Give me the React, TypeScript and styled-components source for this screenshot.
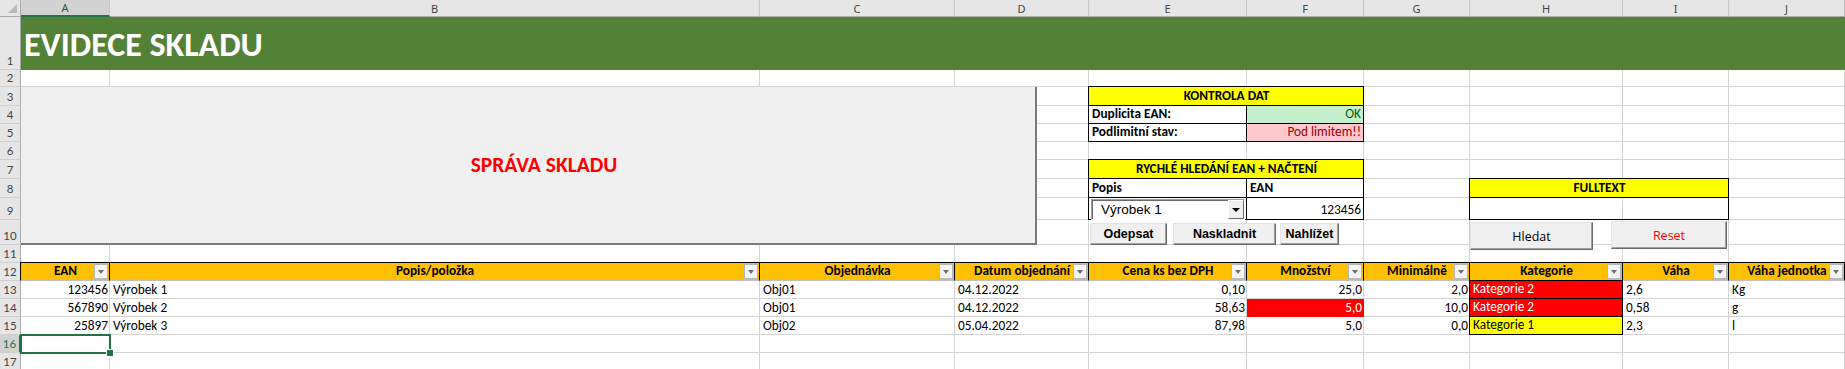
import React from "react";
import styled, { createGlobalStyle, css } from "styled-components";

const GRID = "#d4d4d4";
const HEAD_BG = "#e6e6e6";
const XL_GREEN = "#217346";
const BODY_FONT = `Carlito, Lato, "Noto Sans", sans-serif`;

const COLS = [21, 89, 650, 195, 134, 158, 117, 106, 153, 106, 116];
const ROWS = [17, 53, 17, 19, 18, 18, 18, 19, 19, 22, 25, 18, 18, 18, 18, 18, 18, 18];
const LETTERS = ["A", "B", "C", "D", "E", "F", "G", "H", "I", "J"];

const GlobalStyle = createGlobalStyle`
  html, body { margin: 0; padding: 0; background: #ffffff; overflow: hidden; }
  body { font-family: ${BODY_FONT}; }
  * { box-sizing: border-box; }
`;

type Place = { $r: number; $c: number; $rs?: number; $cs?: number };

const place = css<Place>`
  grid-row: ${(p) => p.$r + 1} / span ${(p) => p.$rs ?? 1};
  grid-column: ${(p) => p.$c + 1} / span ${(p) => p.$cs ?? 1};
`;

const Sheet = styled.div`
  display: grid;
  grid-template-columns: ${COLS.map((c) => `${c}px`).join(" ")};
  grid-template-rows: ${ROWS.map((r) => `${r}px`).join(" ")};
  width: 1845px;
  height: 369px;
  overflow: hidden;
  font-family: ${BODY_FONT};
  font-size: 13.3px;
  color: #000;
`;

const Corner = styled.div`
  grid-row: 1;
  grid-column: 1;
  position: relative;
  background: ${HEAD_BG};
  border-right: 1px solid #ababab;
  border-bottom: 1px solid #ababab;
  &::after {
    content: "";
    position: absolute;
    right: 3px;
    bottom: 3px;
    width: 9px;
    height: 9px;
    background: #b8b8b8;
    clip-path: polygon(100% 0, 100% 100%, 0 100%);
  }
`;

const ColHead = styled.div<{ $c: number; $sel?: boolean }>`
  grid-row: 1;
  grid-column: ${(p) => p.$c + 1};
  display: flex;
  align-items: center;
  justify-content: center;
  font-family: "Noto Sans", Lato, sans-serif;
  font-size: 11px;
  color: ${(p) => (p.$sel ? "#1d5e3a" : "#444")};
  background: ${(p) => (p.$sel ? "#d2d2d2" : HEAD_BG)};
  border-right: 1px solid #c6c6c6;
  border-bottom: ${(p) => (p.$sel ? `2px solid ${XL_GREEN}` : "1px solid #ababab")};
`;

const RowHead = styled.div<{ $r: number; $sel?: boolean }>`
  grid-row: ${(p) => p.$r + 1};
  grid-column: 1;
  display: flex;
  align-items: flex-end;
  justify-content: center;
  padding-bottom: 2px;
  font-family: Lato, "Noto Sans", sans-serif;
  font-size: 11.5px;
  line-height: 13px;
  color: ${(p) => (p.$sel ? XL_GREEN : "#444")};
  background: ${(p) => (p.$sel ? "#d2d2d2" : HEAD_BG)};
  border-bottom: 1px solid #cfcfcf;
  border-right: ${(p) => (p.$sel ? `2px solid ${XL_GREEN}` : "1px solid #ababab")};
`;

const GridCell = styled.div<Place>`
  ${place}
  border-right: 1px solid ${GRID};
  border-bottom: 1px solid ${GRID};
`;

type CellLook = {
  $align?: "l" | "c" | "r";
  $bg?: string;
  $fg?: string;
  $bold?: boolean;
  $boxed?: boolean;
  $head?: boolean;
};

const Cell = styled.div<Place & CellLook>`
  ${place}
  position: relative;
  display: flex;
  align-items: flex-end;
  justify-content: ${(p) => (p.$align === "r" ? "flex-end" : p.$align === "c" ? "center" : "flex-start")};
  padding: 0 2px 1px 3px;
  line-height: 16px;
  white-space: nowrap;
  background: ${(p) => p.$bg ?? "transparent"};
  color: ${(p) => p.$fg ?? "#000"};
  font-weight: ${(p) => (p.$bold ? 700 : 400)};
  ${(p) =>
    p.$boxed
      ? css`
          margin: -1px 0 0 -1px;
          border: 1px solid #000;
        `
      : p.$head
      ? css`
          margin: -1px 0 0 -1px;
          border: 1px solid #000;
          border-bottom-color: #bfbfbf;
        `
      : ""}
`;

const Title = styled.div<Place>`
  ${place}
  display: flex;
  align-items: center;
  padding: 2px 0 0 3px;
  background: #538135;
  color: #ffffff;
  font-family: ${BODY_FONT};
  font-weight: 700;
  font-size: 34px;
`;

const Panel = styled.div<Place>`
  ${place}
  z-index: 2;
  margin-right: 52px;
  display: flex;
  align-items: center;
  justify-content: center;
  padding-left: 32px;
  background: #f0f0f0;
  border-right: 2px solid #7a7a7a;
  border-bottom: 2px solid #7a7a7a;
  color: #ff0000;
  font-family: ${BODY_FONT};
  font-weight: 700;
  font-size: 21.5px;
`;

const FilterBtn = styled.span`
  position: absolute;
  right: 1px;
  bottom: 1px;
  width: 14px;
  height: 15px;
  background: #f4f4f4;
  border: 1px solid #b6b6b6;
  &::after {
    content: "";
    position: absolute;
    left: 3px;
    top: 5px;
    border-left: 3.5px solid transparent;
    border-right: 3.5px solid transparent;
    border-top: 4px solid #6e6e6e;
  }
`;

const Combo = styled.div<Place>`
  ${place}
  z-index: 2;
  align-self: start;
  margin: 1px 2px 0 2px;
  height: 21px;
  display: flex;
  align-items: center;
  justify-content: space-between;
  padding-left: 9px;
  background: #ffffff;
  border: 1px solid;
  border-color: #a0a0a0 #ffffff #ffffff #a0a0a0;
  box-shadow: inset 1px 1px 0 #696969;
  font-family: "Liberation Sans", Arial, sans-serif;
  font-size: 13.5px;
  color: #000;
`;

const ComboArrow = styled.span`
  position: relative;
  width: 16px;
  height: 19px;
  background: #f0f0f0;
  border: 1px solid;
  border-color: #ffffff #696969 #696969 #ffffff;
  &::after {
    content: "";
    position: absolute;
    left: 3px;
    top: 7px;
    border-left: 4px solid transparent;
    border-right: 4px solid transparent;
    border-top: 4px solid #000;
  }
`;

const ButtonBar = styled.div<Place & { $pt: number; $pl: number }>`
  ${place}
  z-index: 2;
  display: flex;
  align-items: flex-start;
  padding-top: ${(p) => p.$pt}px;
  padding-left: ${(p) => p.$pl}px;
`;

const FormButton = styled.button<{ $w: number; $h: number; $ml?: number; $mt?: number; $bold?: boolean; $fg?: string }>`
  flex: none;
  width: ${(p) => p.$w}px;
  height: ${(p) => p.$h}px;
  margin-left: ${(p) => p.$ml ?? 0}px;
  margin-top: ${(p) => p.$mt ?? 0}px;
  padding: 0;
  background: #f0f0f0;
  border: 1px solid;
  border-color: #e3e3e3 #696969 #696969 #e3e3e3;
  box-shadow: inset -1px -1px 0 #a0a0a0;
  color: ${(p) => p.$fg ?? "#000"};
  font-family: ${(p) => (p.$bold ? `"Liberation Sans", Arial, sans-serif` : `"Open Sans", "Noto Sans", sans-serif`)};
  font-weight: ${(p) => (p.$bold ? 700 : 400)};
  font-size: 12.5px;
`;

const ActiveCell = styled.div<Place>`
  ${place}
  z-index: 3;
  position: relative;
  margin: -1px;
  border: 2px solid ${XL_GREEN};
  &::after {
    content: "";
    position: absolute;
    right: -5px;
    bottom: -5px;
    width: 6px;
    height: 6px;
    background: ${XL_GREEN};
    border: 1px solid #ffffff;
  }
`;

type CellDef = {
  r: number;
  c: number;
  cs?: number;
  text?: string;
  align?: "l" | "c" | "r";
  bg?: string;
  fg?: string;
  bold?: boolean;
  boxed?: boolean;
  head?: boolean;
  filter?: boolean;
};

const headers = [
  "EAN",
  "Popis/položka",
  "Objednávka",
  "Datum objednání",
  "Cena ks bez DPH",
  "Množství",
  "Minimálně",
  "Kategorie",
  "Váha",
  "Váha jednotka",
];

const items = [
  { ean: "123456", popis: "Výrobek 1", obj: "Obj01", datum: "04.12.2022", cena: "0,10", mnoz: "25,0", min: "2,0", kat: "Kategorie 2", vaha: "2,6", jed: "Kg", low: false },
  { ean: "567890", popis: "Výrobek 2", obj: "Obj01", datum: "04.12.2022", cena: "58,63", mnoz: "5,0", min: "10,0", kat: "Kategorie 2", vaha: "0,58", jed: "g", low: true },
  { ean: "25897", popis: "Výrobek 3", obj: "Obj02", datum: "05.04.2022", cena: "87,98", mnoz: "5,0", min: "0,0", kat: "Kategorie 1", vaha: "2,3", jed: "l", low: false },
];

const YELLOW = "#ffff00";

const cells: CellDef[] = [
  { r: 3, c: 5, cs: 2, text: "KONTROLA DAT", align: "c", bg: YELLOW, bold: true, boxed: true },
  { r: 4, c: 5, text: "Duplicita EAN:", bold: true, boxed: true },
  { r: 4, c: 6, text: "OK", align: "r", bg: "#c6efce", fg: "#006100", boxed: true },
  { r: 5, c: 5, text: "Podlimitní stav:", bold: true, boxed: true },
  { r: 5, c: 6, text: "Pod limitem!!", align: "r", bg: "#ffc7ce", fg: "#9c0006", boxed: true },
  { r: 7, c: 5, cs: 2, text: "RYCHLÉ HLEDÁNÍ EAN + NAČTENÍ", align: "c", bg: YELLOW, bold: true, boxed: true },
  { r: 8, c: 5, text: "Popis", bold: true, boxed: true },
  { r: 8, c: 6, text: "EAN", bold: true, boxed: true },
  { r: 9, c: 5, boxed: true },
  { r: 9, c: 6, text: "123456", align: "r", boxed: true },
  { r: 8, c: 8, cs: 2, text: "FULLTEXT", align: "c", bg: YELLOW, bold: true, boxed: true },
  { r: 9, c: 8, cs: 2, boxed: true },
  ...headers.map((h, i) => ({ r: 12, c: i + 1, text: h, align: "c" as const, bg: "#ffc000", bold: true, head: true, filter: true })),
  ...items.flatMap((it, i) => {
    const r = 13 + i;
    const katRed = it.kat === "Kategorie 2";
    return [
      { r, c: 1, text: it.ean, align: "r" as const },
      { r, c: 2, text: it.popis },
      { r, c: 3, text: it.obj },
      { r, c: 4, text: it.datum },
      { r, c: 5, text: it.cena, align: "r" as const },
      { r, c: 6, text: it.mnoz, align: "r" as const, bg: it.low ? "#ff0000" : undefined, fg: it.low ? "#ffffff" : undefined },
      { r, c: 7, text: it.min, align: "r" as const },
      { r, c: 8, text: it.kat, bg: katRed ? "#ff0000" : YELLOW, fg: katRed ? "#ffffff" : "#000", boxed: true },
      { r, c: 9, text: it.vaha },
      { r, c: 10, text: it.jed },
    ] as CellDef[];
  }),
];

export default function App() {
  const gridCells: React.ReactNode[] = [];
  for (let r = 2; r <= 17; r++) {
    for (let c = 1; c <= 10; c++) {
      gridCells.push(<GridCell key={`g${r}-${c}`} $r={r} $c={c} />);
    }
  }

  return (
    <>
      <GlobalStyle />
      <Sheet>
        <Corner />
        {LETTERS.map((l, i) => (
          <ColHead key={l} $c={i + 1} $sel={i === 0}>
            {l}
          </ColHead>
        ))}
        {Array.from({ length: 17 }, (_, i) => (
          <RowHead key={i} $r={i + 1} $sel={i + 1 === 16}>
            {i + 1}
          </RowHead>
        ))}

        {gridCells}

        <Title $r={1} $c={1} $cs={10}>
          EVIDECE SKLADU
        </Title>

        {cells.map((d, i) => (
          <Cell
            key={i}
            $r={d.r}
            $c={d.c}
            $cs={d.cs}
            $align={d.align}
            $bg={d.bg}
            $fg={d.fg}
            $bold={d.bold}
            $boxed={d.boxed}
            $head={d.head}
          >
            {d.text}
            {d.filter && <FilterBtn />}
          </Cell>
        ))}

        <Panel $r={3} $c={1} $rs={8} $cs={4}>
          SPRÁVA SKLADU
        </Panel>

        <Combo $r={9} $c={5}>
          Výrobek 1
          <ComboArrow />
        </Combo>

        <ButtonBar $r={10} $c={5} $cs={2} $pt={3} $pl={1}>
          <FormButton $w={77} $h={22} $bold>
            Odepsat
          </FormButton>
          <FormButton $w={103} $h={22} $ml={6} $bold>
            Naskladnit
          </FormButton>
          <FormButton $w={59} $h={22} $ml={4} $bold>
            Nahlížet
          </FormButton>
        </ButtonBar>

        <ButtonBar $r={10} $c={8} $cs={2} $pt={1} $pl={0}>
          <FormButton $w={123} $h={28} $mt={1}>
            Hledat
          </FormButton>
          <FormButton $w={116} $h={28} $ml={18} $fg="#ff0000">
            Reset
          </FormButton>
        </ButtonBar>

        <ActiveCell $r={16} $c={1} />
      </Sheet>
    </>
  );
}
